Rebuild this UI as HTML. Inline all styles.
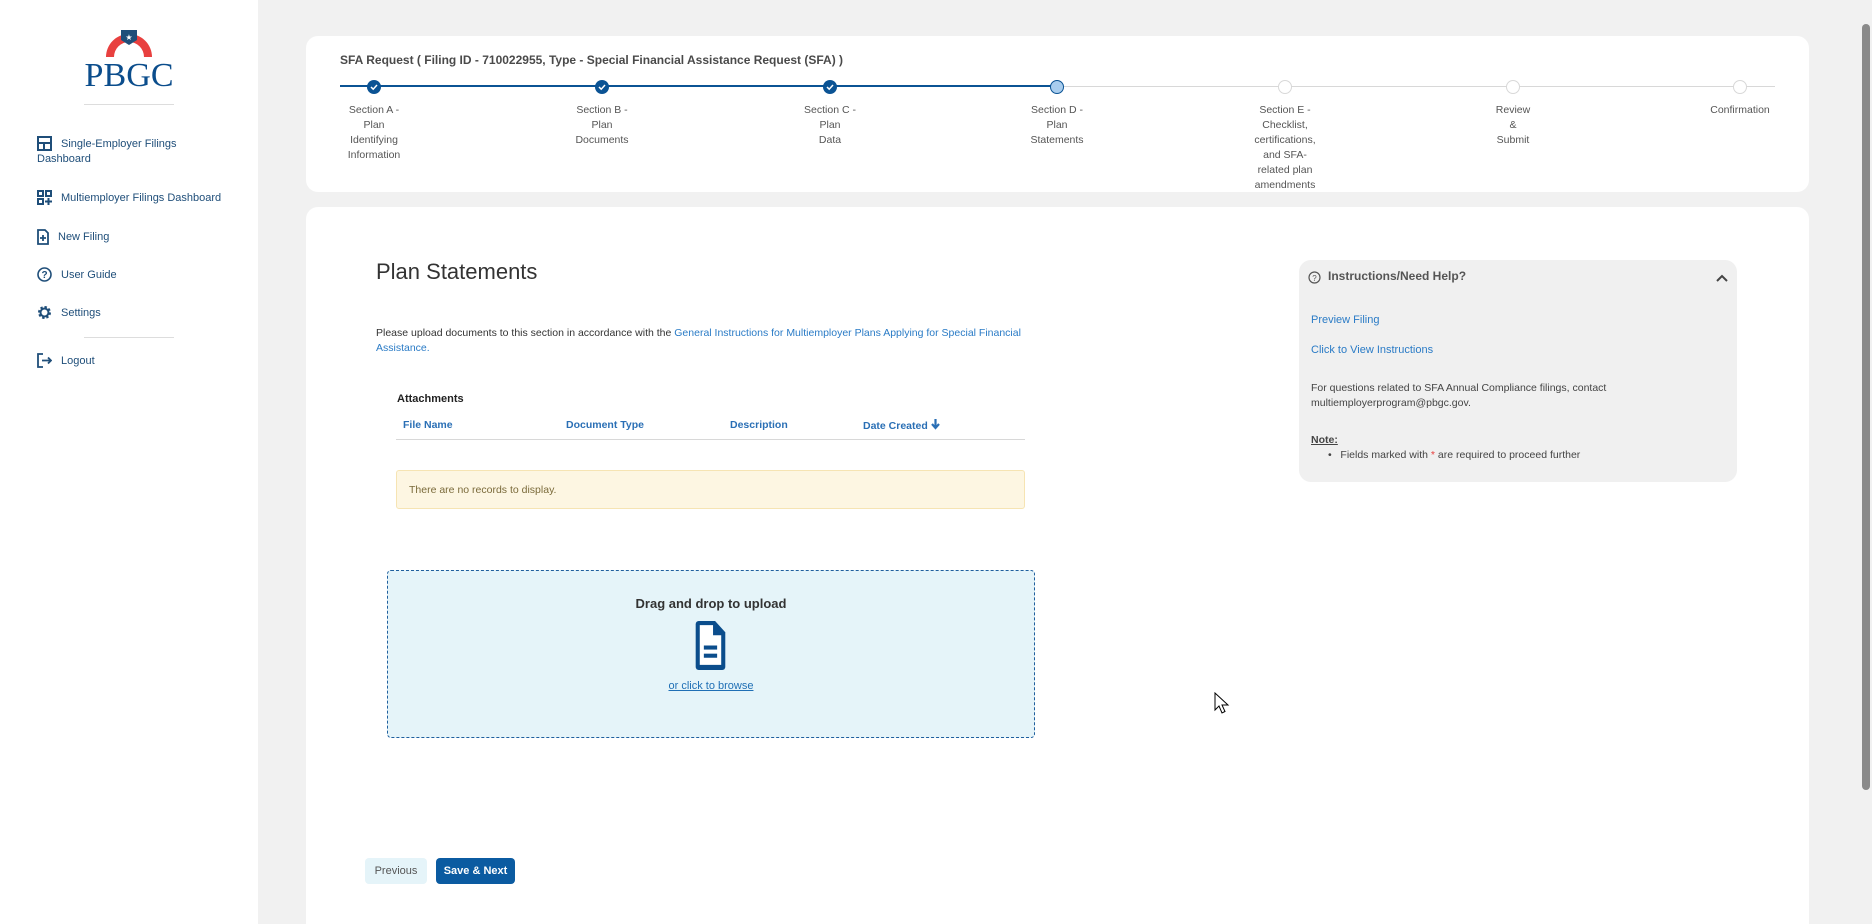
<!DOCTYPE html>
<html style="width:1872px;height:924px;overflow:hidden"><head><meta charset="utf-8"><style>
*{box-sizing:border-box;margin:0;padding:0}
body{width:1872px;height:924px;overflow:hidden;background:#f1f1f1;font-family:"Liberation Sans",sans-serif;position:relative;color:#333}
.abs{position:absolute}
.side{left:0;top:0;width:258px;height:924px;background:#fff}
.nav{position:absolute;left:37px;font-size:11px;color:#1f4e79;display:flex;align-items:center}
.nav svg{margin-right:9px}
.hr{position:absolute;left:84px;width:90px;height:1px;background:#ddd}
.card{background:#fff;border-radius:12px}
.step{position:absolute;top:80px;width:14px;height:14px;border-radius:50%;margin-left:-7px}
.done{background:#0b5394}
.cur{background:#a9cdee;border:1.5px solid #0b5394}
.todo{background:#fff;border:1px solid #d8d8d8}
.lbl{position:absolute;top:103px;width:120px;margin-left:-60px;text-align:center;font-size:10.5px;line-height:15px;color:#555}
.th{position:absolute;top:419px;font-size:10.5px;font-weight:bold;color:#2a6fb5}
a{color:#2a7bc6;text-decoration:none}
</style></head><body>
<div class="abs side">
 <svg class="abs" style="left:84px;top:30px" width="90" height="58" viewBox="0 0 90 58">
  <path d="M22 27 A23 23 0 0 1 68 27 L60 27 A15 15 0 0 0 30 27Z" fill="#e8403f"/>
  <path d="M37 0 L53 0 L53 10 L45 15 L37 10Z" fill="#1f4e79"/>
  <text x="45" y="10" font-size="8" fill="#fff" text-anchor="middle">★</text>
  <text x="45" y="56" font-family="Liberation Serif" font-size="34" fill="#0b4d8c" text-anchor="middle" textLength="89" lengthAdjust="spacing">PBGC</text>
 </svg>
 <div class="hr" style="top:104px"></div>
 <div class="nav" style="top:136px"><svg width="15" height="15" viewBox="0 0 15 15"><rect x="1" y="1" width="13" height="13" fill="none" stroke="#1f4e79" stroke-width="2"/><path d="M1 7h13M7 7v7" stroke="#1f4e79" stroke-width="2"/></svg>Single-Employer Filings</div>
 <div class="nav" style="top:153px">Dashboard</div>
 <div class="nav" style="top:190px"><svg width="15" height="15" viewBox="0 0 15 15" fill="none" stroke="#1f4e79" stroke-width="2"><rect x="1" y="1" width="5" height="5"/><rect x="9" y="1" width="5" height="5"/><rect x="1" y="9" width="5" height="5"/><path d="M11.5 8v7M8 11.5h7"/></svg>Multiemployer Filings Dashboard</div>
 <div class="nav" style="top:229px"><svg width="12" height="16" viewBox="0 0 12 16" fill="none" stroke="#1f4e79" stroke-width="1.8"><path d="M1 1h7l3 3v11H1z"/><path d="M6 6v6M3 9h6"/></svg>New Filing</div>
 <div class="nav" style="top:267px"><svg width="15" height="15" viewBox="0 0 15 15"><circle cx="7.5" cy="7.5" r="6.5" fill="none" stroke="#1f4e79" stroke-width="1.6"/><text x="7.5" y="11" font-size="10" font-weight="bold" fill="#1f4e79" text-anchor="middle">?</text></svg>User Guide</div>
 <div class="nav" style="top:305px"><svg width="15" height="15" viewBox="0 0 15 15"><circle cx="7.5" cy="7.5" r="5" fill="none" stroke="#1f4e79" stroke-width="3" stroke-dasharray="2.2 1.7"/><circle cx="7.5" cy="7.5" r="4" fill="none" stroke="#1f4e79" stroke-width="2"/></svg>Settings</div>
 <div class="hr" style="top:337px"></div>
 <div class="nav" style="top:353px"><svg width="15" height="15" viewBox="0 0 15 15" fill="none" stroke="#1f4e79" stroke-width="1.8"><path d="M6 1H1v13h5M5 7.5h9M11 4.5l3 3-3 3"/></svg>Logout</div>
</div>

<div class="abs card" style="left:306px;top:36px;width:1503px;height:156px"></div>
<div class="abs" style="left:340px;top:53px;font-size:12px;font-weight:bold;color:#4a4a4a">SFA Request ( Filing ID - 710022955, Type - Special Financial Assistance Request (SFA) )</div>
<div class="abs" style="left:340px;top:85px;width:717px;height:2px;background:#0b5394"></div>
<div class="abs" style="left:1057px;top:86px;width:718px;height:1px;background:#d8d8d8"></div>
<div class="step done" style="left:374px"><svg width="14" height="14"><path d="M4 7l2.2 2.2L10 5" stroke="#fff" stroke-width="1.5" fill="none"/></svg></div>
<div class="step done" style="left:602px"><svg width="14" height="14"><path d="M4 7l2.2 2.2L10 5" stroke="#fff" stroke-width="1.5" fill="none"/></svg></div>
<div class="step done" style="left:830px"><svg width="14" height="14"><path d="M4 7l2.2 2.2L10 5" stroke="#fff" stroke-width="1.5" fill="none"/></svg></div>
<div class="step cur" style="left:1057px"></div>
<div class="step todo" style="left:1285px"></div>
<div class="step todo" style="left:1513px"></div>
<div class="step todo" style="left:1740px"></div>
<div class="lbl" style="left:374px">Section A -<br>Plan<br>Identifying<br>Information</div>
<div class="lbl" style="left:602px">Section B -<br>Plan<br>Documents</div>
<div class="lbl" style="left:830px">Section C -<br>Plan<br>Data</div>
<div class="lbl" style="left:1057px">Section D -<br>Plan<br>Statements</div>
<div class="lbl" style="left:1285px">Section E -<br>Checklist,<br>certifications,<br>and SFA-<br>related plan<br>amendments</div>
<div class="lbl" style="left:1513px">Review<br>&amp;<br>Submit</div>
<div class="lbl" style="left:1740px">Confirmation</div>

<div class="abs card" style="left:306px;top:207px;width:1503px;height:730px"></div>
<div class="abs" style="left:376px;top:259px;font-size:22px;color:#333">Plan Statements</div>
<div class="abs" style="left:376px;top:326px;width:660px;font-size:10.5px;line-height:15px;color:#333">Please upload documents to this section in accordance with the <a>General Instructions for Multiemployer Plans Applying for Special Financial Assistance.</a></div>
<div class="abs" style="left:397px;top:393px;font-size:11px;font-weight:bold;color:#222">Attachments</div>
<div class="th" style="left:403px">File Name</div>
<div class="th" style="left:566px">Document Type</div>
<div class="th" style="left:730px">Description</div>
<div class="th" style="left:863px">Date Created <svg width="9" height="11" viewBox="0 0 9 11" style="vertical-align:-1px"><path d="M4.5 0v8M1 5l3.5 4 3.5-4" stroke="#2a6fb5" stroke-width="2.2" fill="none"/></svg></div>
<div class="abs" style="left:396px;top:439px;width:629px;height:1px;background:#d8d8d8"></div>
<div class="abs" style="left:396px;top:470px;width:629px;height:39px;background:#fdf6e2;border:1px solid #f6e4b3;border-radius:3px;font-size:10.5px;color:#7a6a3a;padding:13px 12px">There are no records to display.</div>
<div class="abs" style="left:387px;top:570px;width:648px;height:168px;background:#e5f4f9;border:1px dashed #1f5f9e;border-radius:4px"></div>
<div class="abs" style="left:387px;top:596px;width:648px;text-align:center;font-size:13px;font-weight:bold;color:#333">Drag and drop to upload</div>
<svg class="abs" style="left:692px;top:621px" width="38" height="49" viewBox="0 0 30 48"><path d="M3 0H19L29 11V45A3 3 0 0 1 26 48H3A3 3 0 0 1 0 45V3A3 3 0 0 1 3 0Z" fill="#0b4d8c"/><path d="M4 4H17V14H25V43H4Z" fill="#fff"/><rect x="8" y="24" width="13" height="4" fill="#0b4d8c"/><rect x="8" y="32" width="13" height="4" fill="#0b4d8c"/></svg>
<div class="abs" style="left:387px;top:680px;width:648px;text-align:center;font-size:11px"><a style="color:#1f6fb5;text-decoration:underline">or click to browse</a></div>

<div class="abs" style="left:1299px;top:260px;width:438px;height:222px;background:#f0f0f0;border-radius:12px"></div>
<svg class="abs" style="left:1308px;top:271px" width="13" height="13"><circle cx="6.5" cy="6.5" r="5.5" fill="none" stroke="#555" stroke-width="1.2"/><text x="6.5" y="10" font-size="8" fill="#555" text-anchor="middle">?</text></svg>
<div class="abs" style="left:1328px;top:269px;font-size:12px;font-weight:bold;color:#555">Instructions/Need Help?</div>
<svg class="abs" style="left:1716px;top:274px" width="12" height="8"><path d="M1 7l5-5 5 5" stroke="#444" stroke-width="2" fill="none"/></svg>
<div class="abs" style="left:1311px;top:314px;font-size:11px"><a>Preview Filing</a></div>
<div class="abs" style="left:1311px;top:344px;font-size:11px"><a>Click to View Instructions</a></div>
<div class="abs" style="left:1311px;top:381px;font-size:10.5px;line-height:15px;color:#444">For questions related to SFA Annual Compliance filings, contact<br>multiemployerprogram@pbgc.gov.</div>
<div class="abs" style="left:1311px;top:434px;font-size:10.5px;font-weight:bold;text-decoration:underline;color:#444">Note:</div>
<div class="abs" style="left:1328px;top:449px;font-size:10.5px;color:#444">•&nbsp;&nbsp; Fields marked with <span style="color:#e8403f">*</span> are required to proceed further</div>

<div class="abs" style="left:365px;top:858px;width:62px;height:26px;background:#e5f4f9;border-radius:4px;font-size:11px;color:#555;text-align:center;line-height:26px">Previous</div>
<div class="abs" style="left:436px;top:858px;width:79px;height:26px;background:#0b5ba1;border-radius:4px;font-size:11px;font-weight:bold;color:#fff;text-align:center;line-height:26px">Save &amp; Next</div>

<div class="abs" style="left:1860px;top:0;width:12px;height:924px;background:#f1f1f1"></div>
<div class="abs" style="left:1862px;top:24px;width:8px;height:766px;background:#8a8a8a;border-radius:4px"></div>
<svg class="abs" style="left:1214px;top:692px" width="20" height="24" viewBox="0 0 20 24"><path d="M1 1V18L5 14L8 21L11 19.5L8 13H14Z" fill="#fff" stroke="#000" stroke-width="1"/></svg>
</body></html>
